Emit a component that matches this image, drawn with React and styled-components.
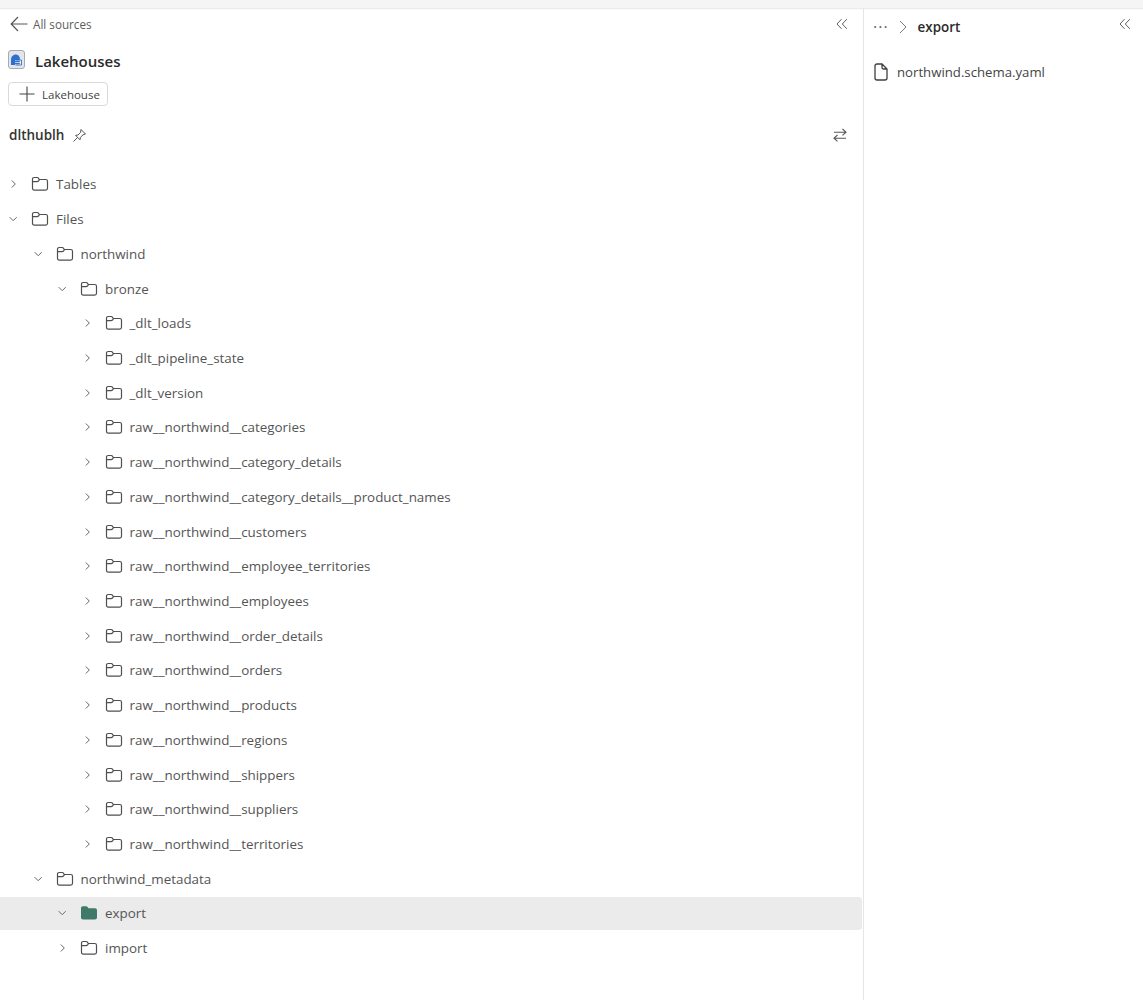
import { createGlobalStyle, styled } from "styled-components";

const GlobalStyle = createGlobalStyle`
  html, body {
    margin: 0;
    padding: 0;
    background: #fff;
  }
  body {
    font-family: "Open Sans", "Noto Sans", "Liberation Sans", sans-serif;
    color: #424242;
  }
`;

const tree = [
  { name: "Tables", depth: 0 },
  { name: "Files", depth: 0, open: true },
  { name: "northwind", depth: 1, open: true },
  { name: "bronze", depth: 2, open: true },
  { name: "_dlt_loads", depth: 3 },
  { name: "_dlt_pipeline_state", depth: 3 },
  { name: "_dlt_version", depth: 3 },
  { name: "raw__northwind__categories", depth: 3 },
  { name: "raw__northwind__category_details", depth: 3 },
  { name: "raw__northwind__category_details__product_names", depth: 3 },
  { name: "raw__northwind__customers", depth: 3 },
  { name: "raw__northwind__employee_territories", depth: 3 },
  { name: "raw__northwind__employees", depth: 3 },
  { name: "raw__northwind__order_details", depth: 3 },
  { name: "raw__northwind__orders", depth: 3 },
  { name: "raw__northwind__products", depth: 3 },
  { name: "raw__northwind__regions", depth: 3 },
  { name: "raw__northwind__shippers", depth: 3 },
  { name: "raw__northwind__suppliers", depth: 3 },
  { name: "raw__northwind__territories", depth: 3 },
  { name: "northwind_metadata", depth: 1, open: true },
  { name: "export", depth: 2, open: true, selected: true },
  { name: "import", depth: 2 },
];

const Chevron = ({ open }) => (
  <svg width="10" height="10" viewBox="0 0 10 10" fill="none" stroke="#666" strokeWidth="1">
    {open ? <path d="M0.7 3.2L4.2 6.7l3.5-3.5" /> : <path d="M2.8 1.5L6.3 5 2.8 8.5" />}
  </svg>
);

const FolderIcon = ({ filled }) =>
  filled ? (
    <svg width="18" height="16" viewBox="0 0 18 16">
      <path d="M1 3C1 2 1.8 1.2 3 1.2h3c.7 0 1.2.3 1.6.8l.9 1.3H15c1.1 0 2 .9 2 2v7.2c0 1.1-.9 2-2 2H3c-1.2 0-2-.9-2-2z" fill="#3f7a68" />
    </svg>
  ) : (
    <svg width="18" height="16" viewBox="0 0 18 16" fill="none" stroke="#4f4f4f" strokeWidth="1.2">
      <path d="M1.5 3.2c0-1 .7-1.7 1.7-1.7h3c.5 0 .9.2 1.2.6l.9 1.4h6.4c1 0 1.8.8 1.8 1.8v7c0 1-.8 1.8-1.8 1.8H3.2c-1 0-1.7-.8-1.7-1.8z" />
      <path d="M1.5 5.6h4.6c.6 0 1-.2 1.4-.6l1.1-1.5" />
    </svg>
  );

const CollapseIcon = () => (
  <svg width="12" height="12" viewBox="0 0 12 12" fill="none" stroke="#5c5c5c" strokeWidth="1">
    <path d="M5.5 1.2L1 6l4.5 4.8M10.8 1.2L6.3 6l4.5 4.8" />
  </svg>
);

const App = () => {
  return (
    <>
      <GlobalStyle />
      <Page>
        <TopStrip />
        <Panels>
          <LeftPanel>
            <BackRow>
              <BackLink>
                <svg width="18" height="16" viewBox="0 0 18 16" fill="none" stroke="#555" strokeWidth="1.2">
                  <path d="M8 1L1.2 8 8 15M1.2 8H17.5" />
                </svg>
                All sources
              </BackLink>
              <CollapseIcon />
            </BackRow>
            <TitleRow>
              <LakeLogo>
                <svg width="17" height="19" viewBox="0 0 17 19">
                  <rect x="0.5" y="0.5" width="16" height="18" rx="2.5" fill="#e2e5ea" stroke="#a4abb4" />
                  <path d="M3 15V9.5C3 7 5 4.5 7.8 4.5c1.8 0 3.4 1.2 4 3.3V15z" fill="#2f6fd0" />
                  <path d="M7 10.5h7M7 12.5h7M7 14.5h7" stroke="#fff" strokeWidth="0.7" />
                  <path d="M7.5 10h6v5h-6" fill="none" stroke="#2f5fa8" strokeWidth="0.8" />
                </svg>
              </LakeLogo>
              <Title>Lakehouses</Title>
            </TitleRow>
            <AddButton>
              <svg width="16" height="16" viewBox="0 0 16 16" fill="none" stroke="#444" strokeWidth="1.1">
                <path d="M8 .5v15M.5 8h15" />
              </svg>
              Lakehouse
            </AddButton>
            <WorkspaceRow>
              <WorkspaceName>
                dlthublh
                <svg width="15" height="15" viewBox="0 0 15 15" fill="none" stroke="#555" strokeWidth="1">
                  <path d="M9 1.5l4.5 4.5-2.5.8-2.6 2.6-.4 2.4L3.6 7.4 6 7l2.6-2.6zM5.4 9.6L1.5 13.5" />
                </svg>
              </WorkspaceName>
              <svg width="14" height="14" viewBox="0 0 14 14" fill="none" stroke="#555" strokeWidth="1.1">
                <path d="M9.5 1L13 4.2 9.5 7.4M13 4.2H1M4.5 7L1 10.2l3.5 3.2M1 10.2h12" />
              </svg>
            </WorkspaceRow>
            <Tree>
              {tree.map((item) => (
                <TreeRow key={item.name} $depth={item.depth} $selected={item.selected}>
                  <Chevron open={item.open} />
                  <FolderIcon filled={item.selected} />
                  <span>{item.name}</span>
                </TreeRow>
              ))}
            </Tree>
          </LeftPanel>
          <RightPanel>
            <Crumbs>
              <CrumbTrail>
                <Dots>···</Dots>
                <svg width="10" height="14" viewBox="0 0 10 14" fill="none" stroke="#777" strokeWidth="1">
                  <path d="M2 1l6 6-6 6" />
                </svg>
                <CrumbCurrent>export</CrumbCurrent>
              </CrumbTrail>
              <CollapseAnchor>
                <CollapseIcon />
              </CollapseAnchor>
            </Crumbs>
            <FileRow>
              <svg width="16" height="18" viewBox="0 0 16 18" fill="none" stroke="#3f3f3f" strokeWidth="1.3">
                <path d="M2 3c0-1.2.8-2 2-2h5l5 5v9c0 1.2-.8 2-2 2H4c-1.2 0-2-.8-2-2zM9 1v3.5c0 .9.6 1.5 1.5 1.5H14" />
              </svg>
              northwind.schema.yaml
            </FileRow>
          </RightPanel>
        </Panels>
      </Page>
    </>
  );
};

export default App;

const Page = styled.div`
  width: 1143px;
  height: 1000px;
  display: flex;
  flex-direction: column;
  overflow: hidden;
`;

const TopStrip = styled.div`
  height: 8px;
  background: #f5f5f5;
  box-shadow: 0 1px 1px #ebebeb;
`;

const Panels = styled.div`
  flex: 1;
  display: flex;
  min-height: 0;
`;

const LeftPanel = styled.div`
  width: 863px;
  border-right: 1px solid #e6e6e6;
  display: flex;
  flex-direction: column;
`;

const RightPanel = styled.div`
  flex: 1;
  display: flex;
  flex-direction: column;
`;

const BackRow = styled.div`
  display: flex;
  align-items: center;
  justify-content: space-between;
  height: 32px;
  padding: 0 15px 0 10px;
`;

const BackLink = styled.div`
  display: flex;
  align-items: center;
  gap: 5px;
  font-size: 11.7px;
  color: #5c5c5c;
`;

const TitleRow = styled.div`
  display: flex;
  align-items: center;
  gap: 10px;
  height: 41px;
  padding-left: 8px;
`;

const LakeLogo = styled.div`
  display: flex;
  margin-top: -3px;
`;

const Title = styled.h1`
  margin: 0;
  font-size: 15px;
  font-weight: 600;
  color: #2b2b2b;
`;

const AddButton = styled.button`
  display: flex;
  align-items: center;
  gap: 7px;
  margin: 1px 0 0 8px;
  width: 100px;
  height: 24px;
  padding: 0 0 0 10px;
  background: #fff;
  border: 1px solid #d9d9d9;
  border-radius: 4px;
  font: inherit;
  font-size: 11.5px;
  color: #424242;
`;

const WorkspaceRow = styled.div`
  display: flex;
  align-items: center;
  justify-content: space-between;
  height: 28px;
  margin-top: 15px;
  padding: 0 16px 0 9px;
`;

const WorkspaceName = styled.div`
  display: flex;
  align-items: center;
  gap: 8px;
  font-size: 13.5px;
  font-weight: 600;
  color: #333;
`;

const Tree = styled.div`
  display: flex;
  flex-direction: column;
  margin-top: 18px;
`;

const TreeRow = styled.div`
  display: flex;
  align-items: center;
  box-sizing: border-box;
  height: 34.73px;
  margin-right: 1px;
  padding-left: ${(props) => 9 + props.$depth * 24.5}px;
  border-block: 1px solid transparent;
  background-clip: padding-box;
  font-size: 13.4px;
  color: #555;
  background-color: ${(props) => (props.$selected ? "#ebebeb" : "transparent")};
  border-radius: ${(props) => (props.$selected ? "0 4px 4px 0" : "0")};

  svg:first-child {
    margin-right: 12px;
  }
  svg + svg {
    margin-right: 7px;
  }
`;

const Crumbs = styled.div`
  display: flex;
  align-items: center;
  justify-content: space-between;
  height: 38px;
  padding: 0 12px 0 9px;
`;

const CrumbTrail = styled.div`
  display: flex;
  align-items: center;
  gap: 9px;
`;

const CollapseAnchor = styled.div`
  display: flex;
  margin-bottom: 7px;
`;

const Dots = styled.span`
  font-size: 16px;
  color: #666;
  letter-spacing: 1px;
`;

const CrumbCurrent = styled.span`
  margin-left: 1px;
  font-size: 13.4px;
  font-weight: 600;
  color: #2b2b2b;
`;

const FileRow = styled.div`
  display: flex;
  align-items: center;
  gap: 8px;
  margin-top: 8px;
  height: 36px;
  padding-left: 9px;
  font-size: 13.2px;
  color: #444;
`;
